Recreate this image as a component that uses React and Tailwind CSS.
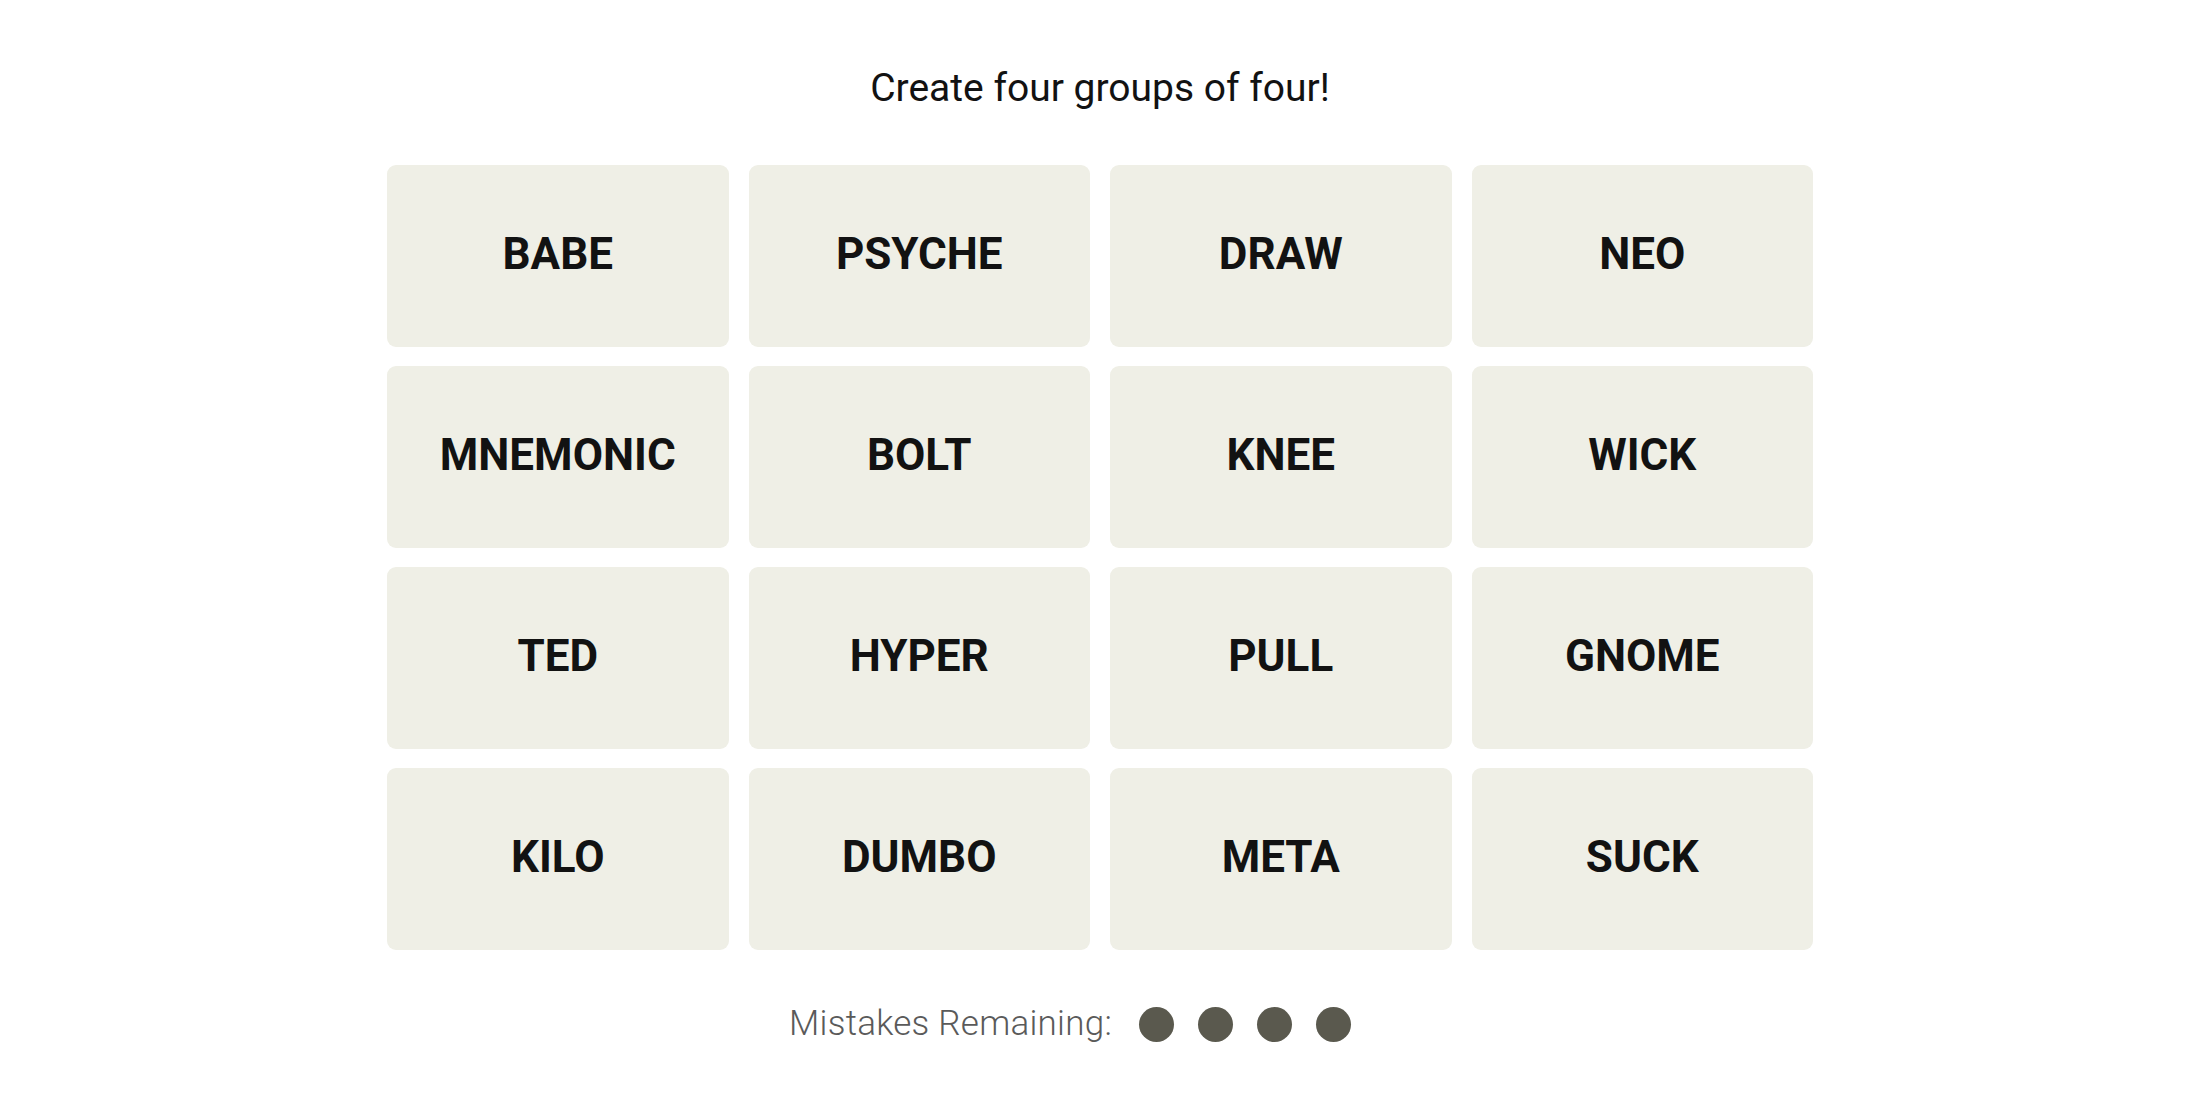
import React from 'react'

const words = [
  'BABE', 'PSYCHE', 'DRAW', 'NEO',
  'MNEMONIC', 'BOLT', 'KNEE', 'WICK',
  'TED', 'HYPER', 'PULL', 'GNOME',
  'KILO', 'DUMBO', 'META', 'SUCK',
]

export default function App() {
  return (
    <div className="min-h-screen w-full bg-white font-['Roboto','Liberation_Sans',sans-serif] text-black">
      <div className="flex flex-col items-center pt-[64px]">
        <p className="text-[39px] leading-[48px] font-normal text-[#121212]">Create four groups of four!</p>

        {/* word grid */}
        <div className="mt-[53px] grid grid-cols-[repeat(4,341.5px)] auto-rows-[182px] gap-x-[20px] gap-y-[19px]">
          {words.map((w) => (
            <button key={w}
              className="flex items-center justify-center rounded-[9px] bg-[#efefe6] pb-[5px] text-[44px] font-bold leading-none text-[#121212]">
              {w}
            </button>
          ))}
        </div>

        {/* mistakes */}
        <div className="mt-[54px] flex w-full items-center justify-center pr-[60px]">
          <span className="text-[35px] leading-[40px] font-light tracking-[0.25px] text-[#5a5a5a]">Mistakes Remaining:</span>
          <div className="ml-[27px] flex gap-[24px]">
            {[0, 1, 2, 3].map((i) => (
              <span key={i} className="h-[35px] w-[35px] rounded-full bg-[#5a594e]" />
            ))}
          </div>
        </div>
      </div>
    </div>
  )
}
